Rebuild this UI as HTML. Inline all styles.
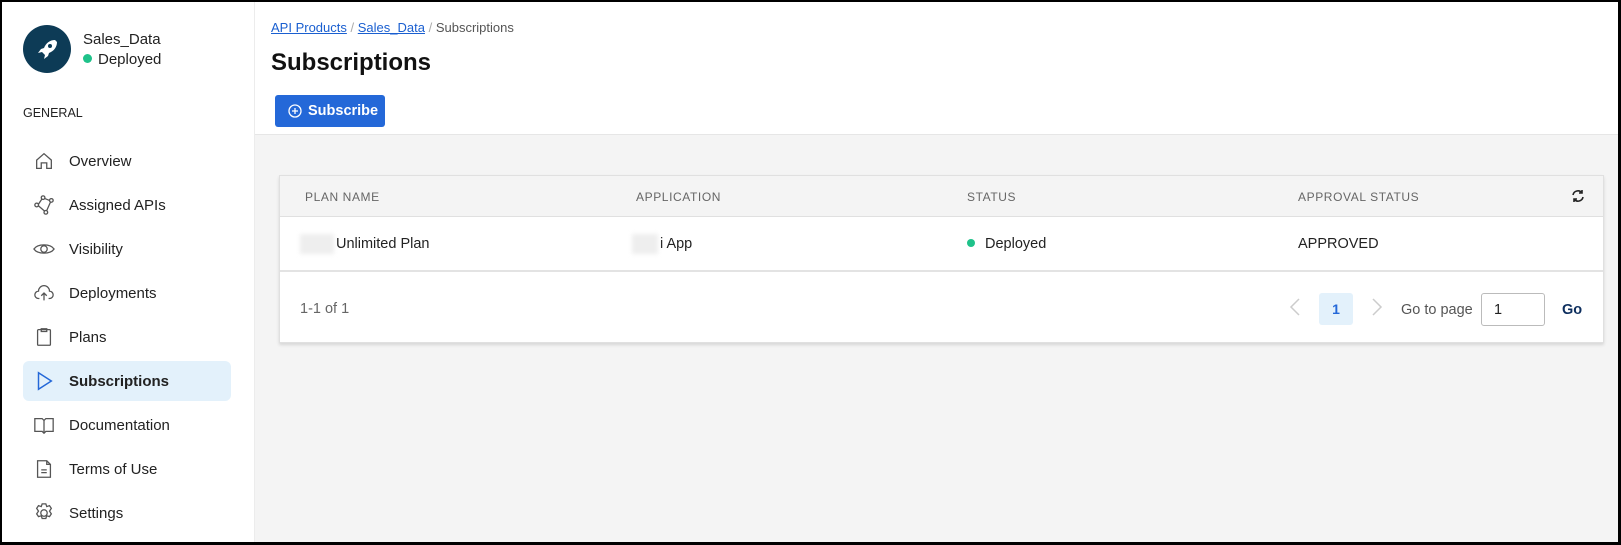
<!DOCTYPE html>
<html><head><meta charset="utf-8"><style>
*{box-sizing:border-box;margin:0;padding:0}
body{width:1621px;height:545px;overflow:hidden;background:#000;font-family:"Liberation Sans",sans-serif;color:#222;position:relative}
.frame{position:absolute;left:2px;top:2px;width:1616px;height:540px;background:#f4f4f4;overflow:hidden}
.side{position:absolute;left:0;top:0;width:253px;height:540px;background:#fff;border-right:1px solid #ececec}
.abs{position:absolute}
.nav{position:absolute;left:21px;width:208px;height:40px;display:flex;align-items:center;font-size:15px;color:#222}
.nav svg{position:absolute;left:10px;width:22px;height:22px}
.nav span{position:absolute;left:46px}
.nav.active{background:#e3f1fb;border-radius:6px;font-weight:bold}
.hdr{position:absolute;left:253px;top:0;right:0;height:133px;background:#fff;border-bottom:1px solid #e6e6e6}
.card{position:absolute;left:277px;top:173px;width:1325px;height:168px;background:#fff;border:1px solid #e0e0e0;box-shadow:0 2px 3px rgba(0,0,0,.12)}
.th{position:absolute;top:14px;font-size:12px;color:#666;letter-spacing:.6px}
.td{position:absolute;top:58px;font-size:14.5px;color:#222}
.blur{display:inline-block;width:34px;height:20px;background:#eee;filter:blur(2px);vertical-align:middle;margin-right:2px}
</style></head><body><div class="frame">
<div class="side">
 <div class="abs" style="left:21px;top:23px;width:48px;height:48px;border-radius:50%;background:#0d3b56"></div>
 <svg class="abs" style="left:33px;top:35px" width="24" height="24" viewBox="0 0 24 24"><path d="M20 3c-5 0-9 3-11 8l-3 1-3 4 4-1 3 3-1 4 4-3 1-3c5-2 8-6 8-11z" fill="#fff"/><circle cx="15" cy="9" r="2" fill="#0d3b56"/></svg>
 <div class="abs" style="left:81px;top:29px;font-size:15px">Sales_Data</div>
 <div class="abs" style="left:81px;top:49px;font-size:15px"><span style="display:inline-block;width:9px;height:9px;border-radius:50%;background:#1fc28a;margin-right:6px;vertical-align:1px"></span>Deployed</div>
 <div class="abs" style="left:21px;top:104px;font-size:12.5px;color:#222">GENERAL</div>
 <div class="nav" style="top:139px"><svg viewBox="0 0 24 24" fill="none" stroke="#555" stroke-width="1.4"><path d="M4 11l8-7 8 7v9h-5v-6h-6v6H4z"/></svg><span>Overview</span></div>
 <div class="nav" style="top:183px"><svg viewBox="0 0 24 24" fill="none" stroke="#555" stroke-width="1.4"><circle cx="11" cy="4" r="2"/><circle cx="20" cy="7" r="2"/><circle cx="4" cy="12" r="2"/><circle cx="14" cy="20" r="2"/><path d="M6 11l4-6M13 5l5 2M19 9l-4 9M13 19l-7-6"/></svg><span>Assigned APIs</span></div>
 <div class="nav" style="top:227px"><svg viewBox="0 0 24 24" fill="none" stroke="#555" stroke-width="1.4"><path d="M1 12c4-6 18-6 22 0c-4 6-18 6-22 0z"/><circle cx="12" cy="12" r="3.5"/></svg><span>Visibility</span></div>
 <div class="nav" style="top:271px"><svg viewBox="0 0 24 24" fill="none" stroke="#555" stroke-width="1.4"><path d="M7 18H6a4 4 0 0 1 0-8 6 6 0 0 1 12 0 4 4 0 0 1 0 8h-1M12 20v-8M9 15l3-3 3 3"/></svg><span>Deployments</span></div>
 <div class="nav" style="top:315px"><svg viewBox="0 0 24 24" fill="none" stroke="#555" stroke-width="1.4"><rect x="5" y="4" width="14" height="17" rx="1"/><path d="M9 3h6v3H9z"/></svg><span>Plans</span></div>
 <div class="nav active" style="top:359px"><svg viewBox="0 0 24 24" fill="none" stroke="#2468d8" stroke-width="1.6"><path d="M6 3l14 9-14 9z"/></svg><span>Subscriptions</span></div>
 <div class="nav" style="top:403px"><svg viewBox="0 0 24 24" fill="none" stroke="#555" stroke-width="1.4"><path d="M2 5h8l2 2 2-2h8v14h-8l-2 2-2-2H2zM12 7v14"/></svg><span>Documentation</span></div>
 <div class="nav" style="top:447px"><svg viewBox="0 0 24 24" fill="none" stroke="#555" stroke-width="1.4"><path d="M5 3h10l4 4v14H5zM15 3v4h4M9 13h6M9 16h6"/></svg><span>Terms of Use</span></div>
 <div class="nav" style="top:491px"><svg viewBox="0 0 24 24" fill="none" stroke="#555" stroke-width="1.4"><path d="M10 2h4l1 3 3-1 2 3-2 3 2 3-2 3-3-1-1 3h-4l-1-3-3 1-2-3 2-3-2-3 2-3 3 1z"/><circle cx="12" cy="12" r="3.5"/></svg><span>Settings</span></div>
</div>
<div class="hdr">
 <div class="abs" style="left:16px;top:18px;font-size:13px;color:#555"><span style="color:#1a5fd0;text-decoration:underline">API Products</span> <span style="color:#aaa">/</span> <span style="color:#1a5fd0;text-decoration:underline">Sales_Data</span> <span style="color:#aaa">/</span> Subscriptions</div>
 <div class="abs" style="left:16px;top:47px;font-size:24px;font-weight:bold;color:#111">Subscriptions</div>
 <div class="abs" style="left:20px;top:93px;width:110px;height:32px;background:#2468d8;border-radius:3px;color:#fff;font-weight:bold;font-size:14.5px;display:flex;align-items:center;padding-left:13px"><svg width="14" height="14" viewBox="0 0 14 14" style="margin-right:6px" fill="none" stroke="#fff" stroke-width="1.3"><circle cx="7" cy="7" r="6"/><path d="M7 4v6M4 7h6"/></svg>Subscribe</div>
</div>
<div class="card">
 <div class="abs" style="left:0;top:0;right:0;height:41px;background:#f4f4f4;border-bottom:1px solid #e0e0e0"></div>
 <div class="th" style="left:25px">PLAN NAME</div>
 <div class="th" style="left:356px">APPLICATION</div>
 <div class="th" style="left:687px">STATUS</div>
 <div class="th" style="left:1018px">APPROVAL STATUS</div>
 <svg class="abs" style="left:1291px;top:13px" width="14" height="14" viewBox="0 0 14 14" fill="none" stroke="#222" stroke-width="1.6"><path d="M2 6a5 5 0 0 1 9-2M12 8a5 5 0 0 1-9 2"/><path d="M11 1v3H8M3 13v-3h3"/></svg>
 <div class="td" style="left:20px"><span class="blur"></span>Unlimited Plan</div>
 <div class="td" style="left:352px"><span class="blur" style="width:26px"></span>i App</div>
 <div class="td" style="left:687px;top:60px"><span style="display:inline-block;width:8px;height:8px;border-radius:50%;background:#1fc28a;margin-right:10px;vertical-align:1px"></span>Deployed</div>
 <div class="td" style="left:1018px;top:60px">APPROVED</div>
 <div class="abs" style="left:0;right:0;top:94px;height:2px;background:#e3e3e3"></div>
 <div class="abs" style="left:20px;top:125px;font-size:14.5px;color:#666">1-1 of 1</div>
 <svg class="abs" style="left:1009px;top:122px" width="12" height="18" viewBox="0 0 12 18" fill="none" stroke="#ccc" stroke-width="1.5"><path d="M10 1L2 9l8 8"/></svg>
 <div class="abs" style="left:1039px;top:117px;width:34px;height:32px;background:#e3f1fb;border-radius:3px;color:#2468d8;font-weight:bold;font-size:14px;text-align:center;line-height:32px">1</div>
 <svg class="abs" style="left:1091px;top:122px" width="12" height="18" viewBox="0 0 12 18" fill="none" stroke="#ccc" stroke-width="1.5"><path d="M2 1l8 8-8 8"/></svg>
 <div class="abs" style="left:1121px;top:126px;font-size:14.5px;color:#555">Go to page</div>
 <div class="abs" style="left:1201px;top:117px;width:64px;height:33px;border:1px solid #bbb;border-radius:3px;font-size:14.5px;padding:8px 0 0 12px">1</div>
 <div class="abs" style="left:1282px;top:126px;font-size:14.5px;font-weight:bold;color:#0d2e5e">Go</div>
</div>
</div></body></html>
